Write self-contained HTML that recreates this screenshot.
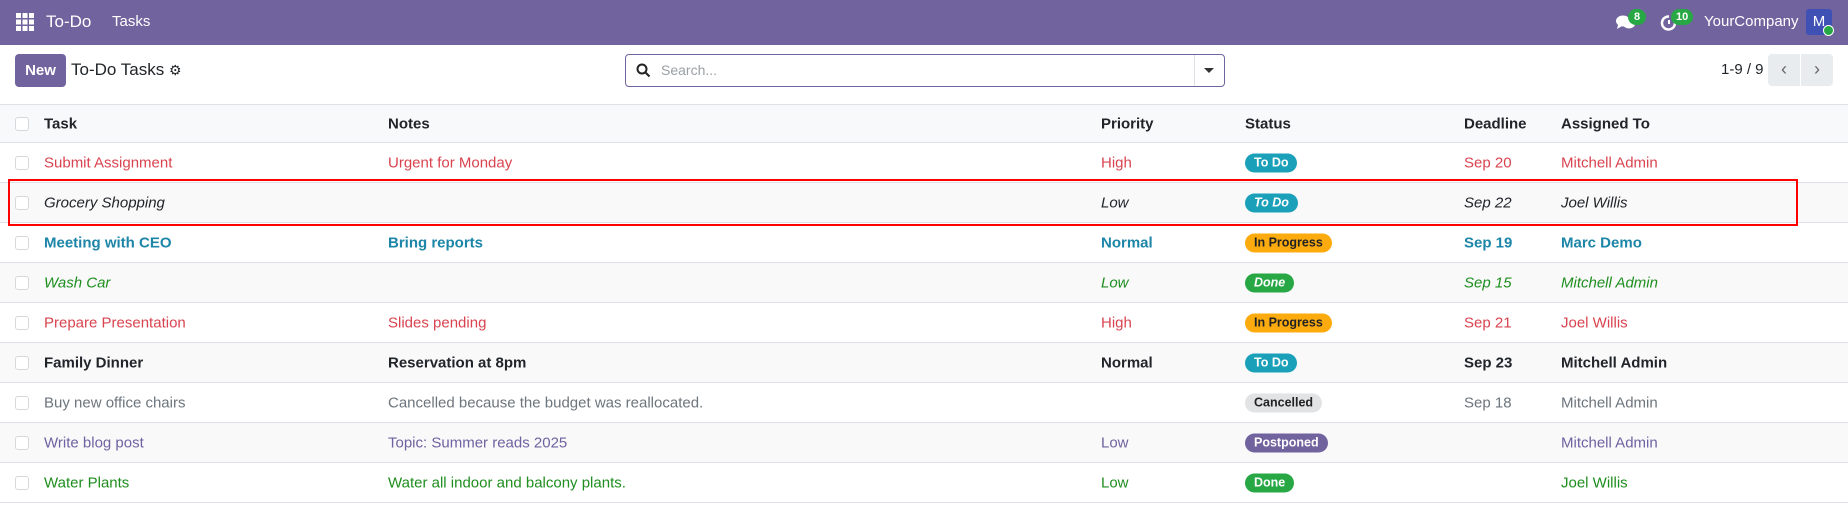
<!DOCTYPE html>
<html><head><meta charset="utf-8"><style>
*{box-sizing:border-box;margin:0;padding:0}
body{width:1848px;height:517px;background:#fff;font-family:"Liberation Sans",sans-serif;position:relative;overflow:hidden;color:#212529}
.abs{position:absolute;white-space:nowrap}
.nav{position:absolute;left:0;top:0;width:1848px;height:45px;background:#71639e}
.row{position:absolute;left:0;width:1848px;height:40px;border-bottom:1px solid #dee2e6}
.row .abs{top:50%;transform:translateY(-50%);font-size:15px}
.cb{position:absolute;left:15px;top:50%;margin-top:-7px;width:14px;height:14px;border:1px solid #d6d8db;border-radius:3px;background:#fff}
.b{display:inline-block;height:19px;line-height:19px;padding:0 9px;border-radius:10px;font-size:12.5px;font-weight:bold}
.red{color:#d9434f}.blue{color:#1d86a8;font-weight:bold}.green{color:#1e8e1e}.grey{color:#6c757d}.pur{color:#6f62a0}.bold{font-weight:bold}.it{font-style:italic}
</style></head><body>
<div class="nav">
 <svg class="abs" style="left:16px;top:13px" width="18" height="18" viewBox="0 0 18 18" fill="#fff"><rect x="0" y="0" width="5" height="5"/><rect x="6.5" y="0" width="5" height="5"/><rect x="13" y="0" width="5" height="5"/><rect x="0" y="6.5" width="5" height="5"/><rect x="6.5" y="6.5" width="5" height="5"/><rect x="13" y="6.5" width="5" height="5"/><rect x="0" y="13" width="5" height="5"/><rect x="6.5" y="13" width="5" height="5"/><rect x="13" y="13" width="5" height="5"/></svg>
 <div class="abs" style="left:46px;top:12px;color:#fff;font-size:17px">To-Do</div>
 <div class="abs" style="left:112px;top:13px;color:#fff;font-size:15px">Tasks</div>
 <svg class="abs" style="left:1615px;top:14px" width="22" height="18" viewBox="0 0 22 18" fill="#fff"><ellipse cx="8" cy="7" rx="7" ry="5.5"/><path d="M3 11 L2 15 L7 12Z"/><ellipse cx="14" cy="10" rx="6" ry="4.5"/></svg>
 <div class="abs" style="left:1628px;top:9px;background:#28a745;color:#fff;font-size:11px;font-weight:bold;border-radius:9px;padding:2px 6px">8</div>
 <svg class="abs" style="left:1660px;top:14px" width="18" height="18" viewBox="0 0 18 18"><path d="M15 9 A6.5 6.5 0 1 1 9 2.5" fill="none" stroke="#fff" stroke-width="2.5"/><path d="M9 6 V10" stroke="#fff" stroke-width="2"/></svg>
 <div class="abs" style="left:1671px;top:9px;background:#28a745;color:#fff;font-size:11px;font-weight:bold;border-radius:9px;padding:2px 5px">10</div>
 <div class="abs" style="left:1704px;top:13px;color:#fff;font-size:15px">YourCompany</div>
 <div class="abs" style="left:1806px;top:9px;width:26px;height:26px;background:#3f51b5;border-radius:3px;color:#fff;font-size:15px;text-align:center;line-height:26px">M</div>
 <div class="abs" style="left:1823px;top:25px;width:11px;height:11px;background:#28a745;border-radius:50%;border:1.5px solid #fff"></div>
</div>
<div class="abs" style="left:15px;top:54px;width:51px;height:33px;background:#71639e;border-radius:4px;color:#fff;font-size:15px;font-weight:bold;text-align:center;line-height:33px">New</div>
<div class="abs" style="left:71px;top:60px;font-size:17px">To-Do Tasks <span style="font-size:14px">⚙</span></div>
<div class="abs" style="left:625px;top:54px;width:600px;height:33px;border:1px solid #71639e;border-radius:4px"></div>
<svg class="abs" style="left:636px;top:63px" width="15" height="15" viewBox="0 0 15 15"><circle cx="6" cy="6" r="4.5" fill="none" stroke="#222" stroke-width="2"/><path d="M9.5 9.5 L13.5 13.5" stroke="#222" stroke-width="2"/></svg>
<div class="abs" style="left:661px;top:62px;color:#9aa0a6;font-size:14px">Search...</div>
<div class="abs" style="left:1194px;top:55px;width:1px;height:31px;background:#dee2e6"></div>
<div class="abs" style="left:1204px;top:68px;border-left:5px solid transparent;border-right:5px solid transparent;border-top:5px solid #333"></div>
<div class="abs" style="left:1721px;top:61px;font-size:15px">1-9 / 9</div>
<div class="abs" style="left:1768px;top:54px;width:32px;height:32px;background:#e9ecef;border-radius:4px 0 0 4px;color:#666;font-size:18px;text-align:center;line-height:30px">‹</div>
<div class="abs" style="left:1801px;top:54px;width:32px;height:32px;background:#e9ecef;border-radius:0 4px 4px 0;color:#666;font-size:18px;text-align:center;line-height:30px">›</div>
<div class="row" style="top:104px;height:39px;background:#f8f9fa;border-top:1px solid #dee2e6">
 <div class="cb"></div>
 <div class="abs bold" style="left:44px">Task</div><div class="abs bold" style="left:388px">Notes</div><div class="abs bold" style="left:1101px">Priority</div><div class="abs bold" style="left:1245px">Status</div><div class="abs bold" style="left:1464px">Deadline</div><div class="abs bold" style="left:1561px">Assigned To</div>
</div>
<div class="row red" style="top:143px"><div class="cb"></div><div class="abs" style="left:44px">Submit Assignment</div><div class="abs" style="left:388px">Urgent for Monday</div><div class="abs" style="left:1101px">High</div><div class="abs" style="left:1245px"><span class="b" style="background:#1ba0b9;color:#fff">To Do</span></div><div class="abs" style="left:1464px">Sep 20</div><div class="abs" style="left:1561px">Mitchell Admin</div></div>
<div class="row it" style="top:183px;background:#f9f9fa"><div class="cb"></div><div class="abs" style="left:44px">Grocery Shopping</div><div class="abs" style="left:1101px">Low</div><div class="abs" style="left:1245px"><span class="b" style="background:#1ba0b9;color:#fff">To Do</span></div><div class="abs" style="left:1464px">Sep 22</div><div class="abs" style="left:1561px">Joel Willis</div></div>
<div class="row blue" style="top:223px"><div class="cb"></div><div class="abs" style="left:44px">Meeting with CEO</div><div class="abs" style="left:388px">Bring reports</div><div class="abs" style="left:1101px">Normal</div><div class="abs" style="left:1245px"><span class="b" style="background:#fbab0d;color:#222">In Progress</span></div><div class="abs" style="left:1464px">Sep 19</div><div class="abs" style="left:1561px">Marc Demo</div></div>
<div class="row green it" style="top:263px;background:#f9f9fa"><div class="cb"></div><div class="abs" style="left:44px">Wash Car</div><div class="abs" style="left:1101px">Low</div><div class="abs" style="left:1245px"><span class="b" style="background:#28a745;color:#fff">Done</span></div><div class="abs" style="left:1464px">Sep 15</div><div class="abs" style="left:1561px">Mitchell Admin</div></div>
<div class="row red" style="top:303px"><div class="cb"></div><div class="abs" style="left:44px">Prepare Presentation</div><div class="abs" style="left:388px">Slides pending</div><div class="abs" style="left:1101px">High</div><div class="abs" style="left:1245px"><span class="b" style="background:#fbab0d;color:#222;font-style:normal">In Progress</span></div><div class="abs" style="left:1464px">Sep 21</div><div class="abs" style="left:1561px">Joel Willis</div></div>
<div class="row bold" style="top:343px;background:#f9f9fa"><div class="cb"></div><div class="abs" style="left:44px">Family Dinner</div><div class="abs" style="left:388px">Reservation at 8pm</div><div class="abs" style="left:1101px">Normal</div><div class="abs" style="left:1245px"><span class="b" style="background:#1ba0b9;color:#fff">To Do</span></div><div class="abs" style="left:1464px">Sep 23</div><div class="abs" style="left:1561px">Mitchell Admin</div></div>
<div class="row grey" style="top:383px"><div class="cb"></div><div class="abs" style="left:44px">Buy new office chairs</div><div class="abs" style="left:388px">Cancelled because the budget was reallocated.</div><div class="abs" style="left:1245px"><span class="b" style="background:#e2e3e5;color:#222">Cancelled</span></div><div class="abs" style="left:1464px">Sep 18</div><div class="abs" style="left:1561px">Mitchell Admin</div></div>
<div class="row pur" style="top:423px;background:#f9f9fa"><div class="cb"></div><div class="abs" style="left:44px">Write blog post</div><div class="abs" style="left:388px">Topic: Summer reads 2025</div><div class="abs" style="left:1101px">Low</div><div class="abs" style="left:1245px"><span class="b" style="background:#71639e;color:#fff">Postponed</span></div><div class="abs" style="left:1561px">Mitchell Admin</div></div>
<div class="row green" style="top:463px"><div class="cb"></div><div class="abs" style="left:44px">Water Plants</div><div class="abs" style="left:388px">Water all indoor and balcony plants.</div><div class="abs" style="left:1101px">Low</div><div class="abs" style="left:1245px"><span class="b" style="background:#28a745;color:#fff">Done</span></div><div class="abs" style="left:1561px">Joel Willis</div></div>
<div class="abs" style="left:8px;top:179px;width:1790px;height:47px;border:2px solid #f00"></div>
</body></html>
